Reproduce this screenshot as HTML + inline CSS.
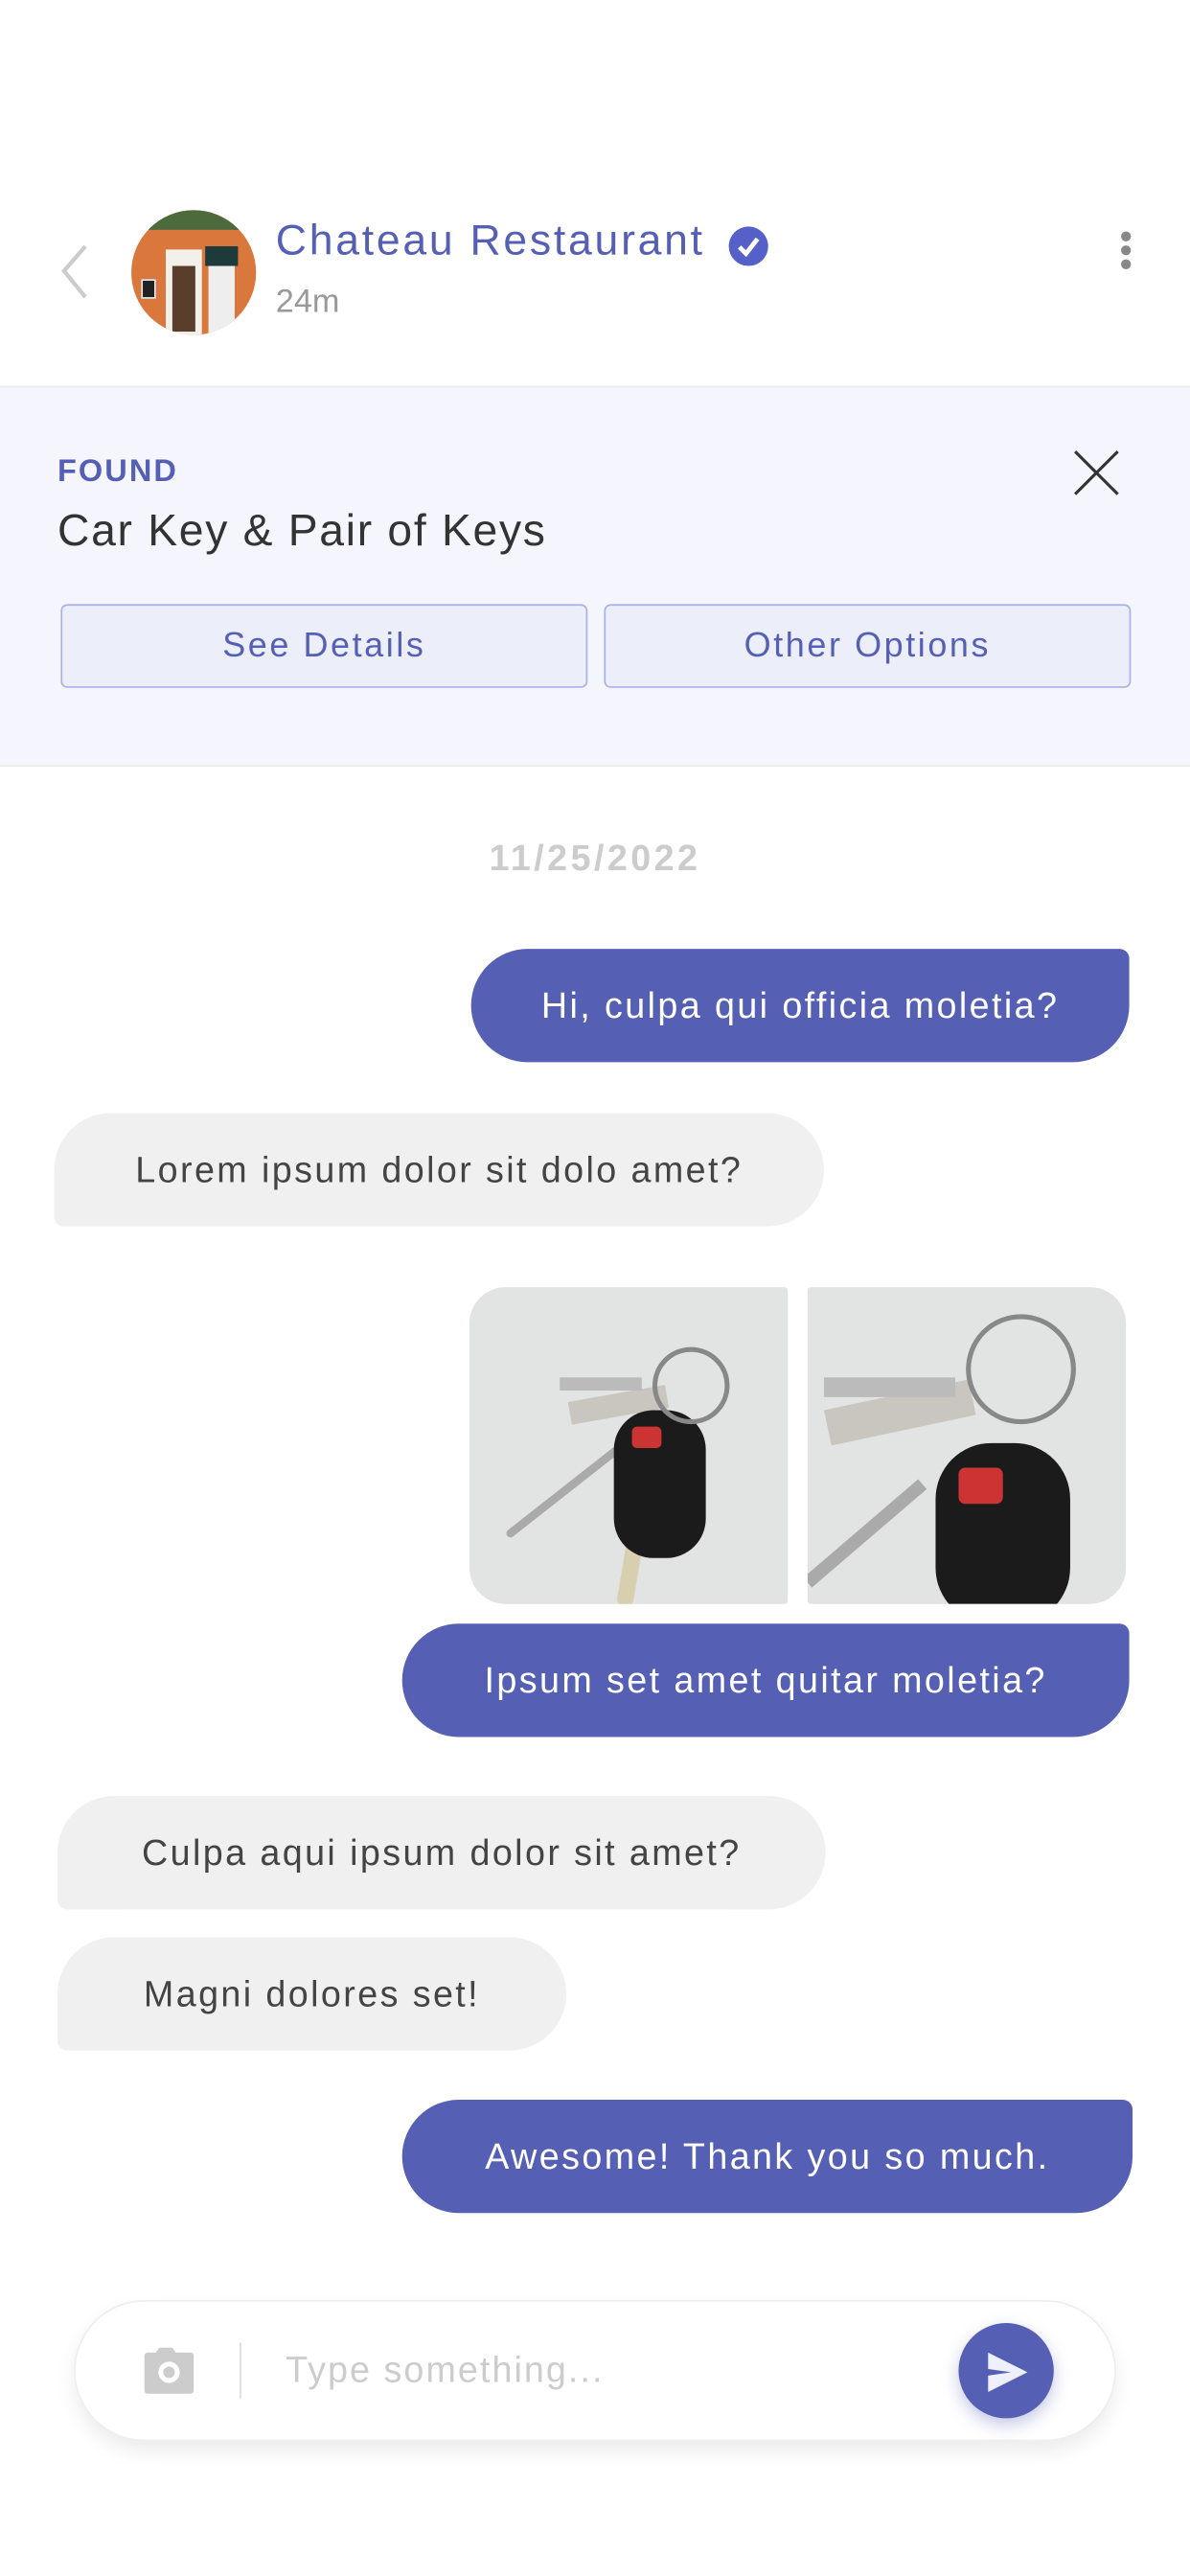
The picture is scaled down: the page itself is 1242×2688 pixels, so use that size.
<!DOCTYPE html>
<html><head><meta charset="utf-8"><style>
html,body{margin:0;padding:0;background:#fff;width:1242px;height:2688px;overflow:hidden}
#w{position:absolute;left:0;top:0;width:725px;height:1569px;transform:scale(1.713103);transform-origin:0 0;font-family:"Liberation Sans",sans-serif}
.a{position:absolute}
.b{position:absolute;display:flex;align-items:center;justify-content:center;font-size:22px;letter-spacing:1.4px;box-sizing:border-box}
.s{background:#5560b5;color:#fff;border-radius:35px 6px 35px 35px}
.r{background:#f0f0f0;color:#444;border-radius:35px 35px 35px 6px}
.btn{position:absolute;top:368px;height:51px;width:321px;box-sizing:border-box;background:#eceefa;border:1px solid #a8b0ea;border-radius:4px;color:#5560b5;font-size:21px;letter-spacing:1.5px;display:flex;align-items:center;justify-content:center}
.img{position:absolute;top:784px;width:194px;height:193px;background:#e2e4e3;overflow:hidden}
</style></head><body><div id="w">
<svg class="a" style="left:34px;top:148px" width="22" height="36"><path d="M18 2 L5 17 L18 33" stroke="#ccc" stroke-width="2.5" fill="none"/></svg>
<div class="a" style="left:80px;top:128px;width:76px;height:76px;border-radius:50%;overflow:hidden;background:#d9773d">
 <div class="a" style="left:0;top:0;width:76px;height:12px;background:#4d6a3c"></div>
 <div class="a" style="left:21px;top:24px;width:22px;height:52px;background:#f2f0ea"></div>
 <div class="a" style="left:25px;top:34px;width:14px;height:40px;background:#5a3e2c"></div>
 <div class="a" style="left:45px;top:22px;width:20px;height:12px;background:#1f3a3a"></div>
 <div class="a" style="left:47px;top:34px;width:16px;height:42px;background:#eee"></div>
 <div class="a" style="left:6px;top:42px;width:7px;height:10px;background:#222;border:1px solid #eee"></div>
</div>
<div class="a" style="left:168px;top:131px;font-size:26px;letter-spacing:1.6px;color:#5560b5">Chateau Restaurant</div>
<svg class="a" style="left:443px;top:137px" width="26" height="26"><circle cx="13" cy="13" r="12" fill="#5560c8"/><path d="M7.5 13.5 L11.5 17.5 L18.5 8.5" stroke="#fff" stroke-width="2.8" fill="none"/></svg>
<div class="a" style="left:168px;top:173px;font-size:20px;color:#999">24m</div>
<svg class="a" style="left:680px;top:140px" width="12" height="26"><circle cx="6" cy="4" r="3" fill="#888"/><circle cx="6" cy="12.5" r="3" fill="#888"/><circle cx="6" cy="21" r="3" fill="#888"/></svg>
<div class="a" style="left:0;top:235px;width:725px;height:232px;background:#f5f6fd;border-top:1px solid #eaeaea;border-bottom:1px solid #eaeaea;box-sizing:border-box"></div>
<div class="a" style="left:35px;top:277px;font-size:19px;letter-spacing:1.2px;font-weight:bold;color:#5560b5">FOUND</div>
<div class="a" style="left:35px;top:308px;font-size:27px;letter-spacing:1px;color:#333">Car Key &amp; Pair of Keys</div>
<svg class="a" style="left:652px;top:272px" width="32" height="32"><path d="M3 3 L29 29 M29 3 L3 29" stroke="#333" stroke-width="1.8"/></svg>
<div class="btn" style="left:37px">See Details</div>
<div class="btn" style="left:368px">Other Options</div>
<div class="a" style="left:0;width:725px;top:510px;text-align:center;font-size:22px;letter-spacing:2px;font-weight:bold;color:#ccc">11/25/2022</div>
<div class="b s" style="left:287px;top:578px;width:401px;height:69px">Hi, culpa qui officia moletia?</div>
<div class="b r" style="left:33px;top:678px;width:469px;height:69px">Lorem ipsum dolor sit dolo amet?</div>
<div class="img" style="left:286px;border-radius:22px 2px 2px 22px">
<svg width="194" height="193"><g stroke-linecap="round"><path d="M25 150 L95 95" stroke="#aaa" stroke-width="5"/><rect x="60" y="70" width="60" height="14" fill="#c9c6c0" transform="rotate(-10 60 70)"/><rect x="55" y="55" width="50" height="8" fill="#bbb"/><path d="M95 190 L105 130" stroke="#d8cfae" stroke-width="10"/><rect x="88" y="75" width="56" height="90" rx="24" fill="#1b1b1b"/><rect x="99" y="85" width="18" height="13" rx="3" fill="#c33"/><circle cx="135" cy="60" r="22" stroke="#888" stroke-width="3" fill="none"/></g></svg></div>
<div class="img" style="left:492px;border-radius:2px 22px 22px 2px">
<svg width="194" height="193"><g><path d="M0 180 L70 120" stroke="#aaa" stroke-width="8"/><rect x="10" y="75" width="90" height="22" fill="#c9c6c0" transform="rotate(-12 10 75)"/><rect x="10" y="55" width="80" height="12" fill="#bbb"/><rect x="78" y="95" width="82" height="110" rx="34" fill="#1b1b1b"/><rect x="92" y="110" width="27" height="22" rx="4" fill="#c33"/><circle cx="130" cy="50" r="32" stroke="#888" stroke-width="3" fill="none"/></g></svg></div>
<div class="b s" style="left:245px;top:989px;width:443px;height:69px">Ipsum set amet quitar moletia?</div>
<div class="b r" style="left:35px;top:1094px;width:468px;height:69px">Culpa aqui ipsum dolor sit amet?</div>
<div class="b r" style="left:35px;top:1180px;width:310px;height:69px">Magni dolores set!</div>
<div class="b s" style="left:245px;top:1279px;width:445px;height:69px">Awesome! Thank you so much.</div>
<div class="a" style="left:45px;top:1401px;width:635px;height:86px;border-radius:43px;background:#fff;border:1px solid #eee;box-sizing:border-box;box-shadow:0 6px 12px rgba(0,0,0,.08)"></div>
<svg class="a" style="left:86px;top:1428px" width="34" height="32"><path d="M9 5 L11 2 H19 L21 5 H30 Q32 5 32 7 V28 Q32 30 30 30 H4 Q2 30 2 28 V7 Q2 5 4 5 Z" fill="#ccc"/><circle cx="17" cy="17" r="6.5" fill="#fff"/><circle cx="17" cy="17" r="3.5" fill="#ccc"/></svg>
<div class="a" style="left:146px;top:1427px;width:1px;height:34px;background:#ddd"></div>
<div class="a" style="left:174px;top:1431px;font-size:22px;letter-spacing:1.2px;color:#ccc">Type something...</div>
<div class="a" style="left:584px;top:1415px;width:58px;height:58px;border-radius:50%;background:#5560b5;box-shadow:0 4px 10px rgba(85,96,181,.35)"></div>
<svg class="a" style="left:599px;top:1430px" width="30" height="30"><path d="M3 3 L27 15 L3 27 L3 17 L17 15 L3 13 Z" fill="#eef0fb"/></svg>
</div></body></html>
